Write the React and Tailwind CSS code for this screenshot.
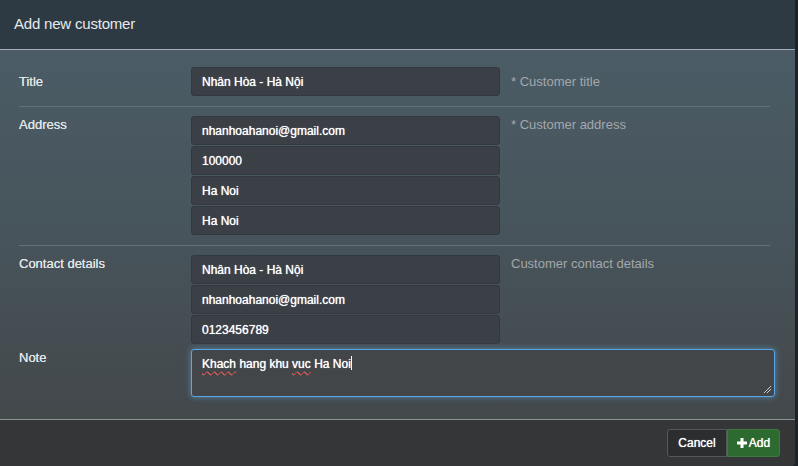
import React from "react";

/**
 * AddCustomerModal
 * ----------------
 * Static "Add new customer" dialog: header, form rows, footer actions.
 */
const fieldCls =
  "h-[29px] w-[309px] flex items-center px-[10px] rounded-[3px] border border-[#32393e] bg-[#3a4046] text-[12px] text-white [text-shadow:0_0_0.8px_#fff]";

const Field = ({ value }) => <div className={fieldCls}>{value}</div>;

const Label = ({ children, centered }) => (
  <div
    className={
      centered
        ? "w-[172px] shrink-0 h-[29px] flex items-center text-[13px] text-[#e2e5e7] [text-shadow:0_0_0.5px_#e2e5e7]"
        : "w-[172px] shrink-0 pt-[1px] leading-[16px] text-[13px] text-[#e2e5e7] [text-shadow:0_0_0.5px_#e2e5e7]"
    }
  >
    {children}
  </div>
);

const Help = ({ children, centered }) => (
  <div
    className={
      centered
        ? "pl-[11px] h-[29px] flex items-center text-[13px] text-[#a3a8ab]"
        : "pl-[11px] pt-[1px] leading-[16px] text-[13px] text-[#a3a8ab]"
    }
  >
    {children}
  </div>
);

const App = () => {
  return (
    <div
      className="w-[798px] h-[466px] flex bg-[#1e2327] overflow-hidden"
      style={{ fontFamily: '"Liberation Sans", Arial, sans-serif' }}
    >
      <div className="w-[795px] h-full flex flex-col">
        {/* Header */}
        <div className="h-[50px] shrink-0 flex items-center pl-[14px] pb-[1px] bg-[#2d3a43] border-b border-[#a2aeb4]">
          <h2 className="text-[15px] tracking-[-0.2px] text-[#e6e9eb]">
            Add new customer
          </h2>
        </div>

        {/* Body */}
        <div className="flex-1 pt-[8px] pl-[19px] pr-[25px] bg-gradient-to-b from-[#4b5c66] via-[#47545b] to-[#43484b]">
          {/* Title */}
          <div className="flex pt-[9px] pb-[10px] border-b border-[#627077]">
            <Label centered>Title</Label>
            <Field value="Nhân Hòa - Hà Nội" />
            <Help centered>* Customer title</Help>
          </div>

          {/* Address */}
          <div className="flex pt-[9px] pb-[10px] border-b border-[#627077]">
            <Label>Address</Label>
            <div className="flex flex-col gap-[1px]">
              <Field value="nhanhoahanoi@gmail.com" />
              <Field value="100000" />
              <Field value="Ha Noi" />
              <Field value="Ha Noi" />
            </div>
            <Help>* Customer address</Help>
          </div>

          {/* Contact details */}
          <div className="flex pt-[9px]">
            <Label>Contact details</Label>
            <div className="flex flex-col gap-[1px]">
              <Field value="Nhân Hòa - Hà Nội" />
              <Field value="nhanhoahanoi@gmail.com" />
              <Field value="0123456789" />
            </div>
            <Help>Customer contact details</Help>
          </div>

          {/* Note */}
          <div className="flex pt-[5px]">
            <Label>Note</Label>
            <div className="relative w-[584px] h-[48px] shrink-0 rounded-[3px] border border-[#5aa6e6] bg-[#424649] shadow-[0_0_6px_rgba(102,175,233,0.6)] px-[10px] pt-[6px] text-[12px] leading-[16px] text-white [text-shadow:0_0_0.8px_#fff]">
              <span className="underline decoration-wavy decoration-[#d42020] decoration-1 underline-offset-[3px]">
                Khach
              </span>{" "}
              hang khu{" "}
              <span className="underline decoration-wavy decoration-[#d42020] decoration-1 underline-offset-[3px]">
                vuc
              </span>{" "}
              Ha Noi
              <span className="inline-block w-[1px] h-[14px] bg-white align-[-2px]" />
              {/* resize grip */}
              <svg
                className="absolute right-[2px] bottom-[2px]"
                width="9"
                height="9"
                viewBox="0 0 9 9"
              >
                <path d="M8 1L1 8M8 4L4 8" stroke="#c9cccd" strokeWidth="1" />
              </svg>
            </div>
          </div>
        </div>

        {/* Footer */}
        <div className="h-[47px] shrink-0 flex justify-end items-start pt-[9px] pr-[15px] bg-[#353637] border-t border-[#8c9093] rounded-br-[4px]">
          <div className="flex">
            <button className="h-[28px] w-[60px] rounded-l-[3px] border border-[#55585b] bg-[#2b2d2f] text-[12px] text-white [text-shadow:0_0_0.8px_#fff]">
              Cancel
            </button>
            <button className="h-[28px] w-[53px] flex items-center justify-center gap-[2px] rounded-r-[3px] border border-[#3c7a3e] bg-[#2d6a2f] text-[12px] text-white [text-shadow:0_0_0.8px_#fff]">
              <svg width="10" height="10" viewBox="0 0 10 10">
                <path d="M3.5 0h3v3.5H10v3H6.5V10h-3V6.5H0v-3h3.5z" fill="#fff" />
              </svg>
              Add
            </button>
          </div>
        </div>
      </div>
    </div>
  );
};

export default App;
